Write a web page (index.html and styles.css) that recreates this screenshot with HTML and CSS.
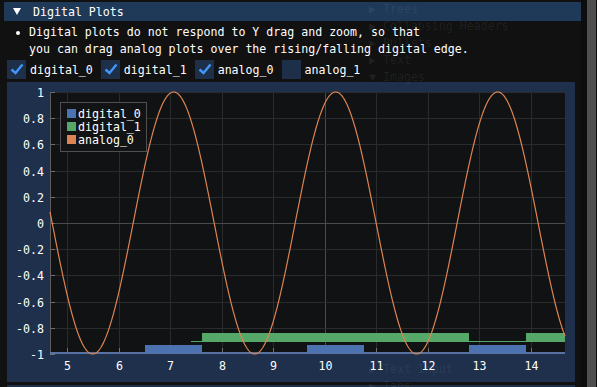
FILE: index.html
```html
<!DOCTYPE html>
<html lang="en">
<head>
  <meta charset="UTF-8">
  <meta name="viewport" content="width=device-width, initial-scale=1.0">
  <title>Digital Plots</title>
  <link rel="stylesheet" href="styles.css">
</head>
<body>
  <div class="app">
    <div class="window">
      <div class="header"><span class="arrow"></span>Digital Plots</div>
      <div class="content">
        <div class="bullet-text">
          <span class="bullet"></span>
          <div>
            <div>Digital plots do not respond to Y drag and zoom, so that</div>
            <div>you can drag analog plots over the rising/falling digital edge.</div>
          </div>
        </div>
        <div class="checks">
          <div class="check"><span class="box"><svg width="19" height="19"><polyline points="4.5,9.5 8.5,13 15.5,4.5" /></svg></span>digital_0</div>
          <div class="check"><span class="box"><svg width="19" height="19"><polyline points="4.5,9.5 8.5,13 15.5,4.5" /></svg></span>digital_1</div>
          <div class="check"><span class="box"><svg width="19" height="19"><polyline points="4.5,9.5 8.5,13 15.5,4.5" /></svg></span>analog_0</div>
          <div class="check"><span class="box"></span>analog_1</div>
        </div>
        <div class="plot-frame">
          <svg id="plot" width="568" height="300" viewBox="7 82 568 300">
            <rect class="plot-bg" x="50" y="92" width="515" height="261" />
            <g id="grid"></g>
            <g id="ticks"></g>
            <line class="axis" x1="50.5" y1="92" x2="50.5" y2="353" />
            <!-- digital_1 -->
            <rect class="green" x="191" y="341" width="11" height="1" />
            <rect class="green" x="202" y="333" width="267" height="9" />
            <rect class="green" x="469" y="341" width="57" height="1" />
            <rect class="green" x="526" y="333" width="39" height="9" />
            <!-- digital_0 -->
            <rect class="blue-low" x="50" y="352" width="515" height="2" />
            <rect class="blue" x="145" y="345" width="57" height="8" />
            <rect class="blue" x="307" y="345" width="57" height="8" />
            <rect class="blue" x="469" y="345" width="57" height="8" />
            <polyline id="analog" class="analog" points="" />
            <g id="labels"></g>
            <g class="legend">
              <rect class="legend-box" x="60.5" y="102.5" width="86" height="49" />
              <rect class="blue" x="67" y="109" width="9" height="9" />
              <rect class="green" x="67" y="122" width="9" height="9" />
              <rect class="orange" x="67" y="135" width="9" height="9" />
              <text x="78" y="114">digital_0</text>
              <text x="78" y="127">digital_1</text>
              <text x="78" y="140">analog_0</text>
            </g>
          </svg>
        </div>
        <div class="next-item"></div>
      </div>
    </div>
    <div class="scroll"><div class="grab"></div></div>
  </div>

  <div class="ghost ghost-top">
    <div>▶ Trees</div>
    <div>▶ Collapsing Headers</div>
    <div>▶ Bullets</div>
    <div>▶ Text</div>
    <div>▼ Images</div>
  </div>
  <div class="ghost ghost-bottom">
    <div>▶ Text Input</div>
    <div>▶ Tabs</div>
  </div>

  <script>
    const NS = "http://www.w3.org/2000/svg";
    const xMin = 4.67, pxPerUnit = 51.56, left = 50, right = 565;
    const zeroY = 223, pxPerY = 131;
    const toX = t => left + (t - xMin) * pxPerUnit;
    const toY = v => zeroY - v * pxPerY;

    function add(parent, tag, attrs, text) {
      const el = document.createElementNS(NS, tag);
      Object.keys(attrs).forEach(k => el.setAttribute(k, attrs[k]));
      if (text !== undefined) el.textContent = text;
      document.getElementById(parent).appendChild(el);
    }

    // grid lines + tick labels
    for (let t = 5; t <= 14; t++) {
      const x = Math.round(toX(t)) + 0.5;
      add("grid", "line", { x1: x, y1: 92, x2: x, y2: 353, class: t === 10 ? "grid major" : "grid" });
      add("ticks", "line", { x1: x, y1: 348, x2: x, y2: 353, class: "tick" });
      add("labels", "text", { x: x, y: 366, class: "xlabel" }, String(t));
    }
    for (let i = -5; i <= 5; i++) {
      const v = i / 5;
      const y = Math.round(toY(v)) + 0.5;
      if (i > -5) add("grid", "line", { x1: 50, y1: y, x2: 565, y2: y, class: i === 0 ? "grid major" : "grid" });
      add("ticks", "line", { x1: 50, y1: y, x2: 55, y2: y, class: "tick" });
      const label = i === 0 ? "0" : (Math.abs(i) === 5 ? String(i / 5) : v.toFixed(1));
      add("labels", "text", { x: 44, y: y, class: "ylabel" }, label);
    }

    // analog_0 = sin(2t)
    const pts = [];
    for (let px = left; px <= right; px += 0.5) {
      const t = xMin + (px - left) / pxPerUnit;
      pts.push(px + "," + toY(Math.sin(2 * t)).toFixed(2));
    }
    document.getElementById("analog").setAttribute("points", pts.join(" "));
  </script>
</body>
</html>
```

FILE: styles.css
```css
body {
  margin: 0;
  width: 597px;
  height: 387px;
  overflow: hidden;
  position: relative;
  background-color: #0d0d0d;
  color: #fff;
  font-family: "DejaVu Sans Mono", "Liberation Mono", monospace;
  font-size: 11.6px;
}
.app {
  display: flex;
  height: 387px;
}
.window {
  width: 581px;
  box-sizing: border-box;
  padding: 2px 0 0 4px;
  background-color: #111;
}
.header {
  height: 19px;
  display: flex;
  align-items: center;
  padding-left: 9px;
  background-color: #1f3958;
}
.arrow {
  width: 0;
  height: 0;
  border-left: 4px solid transparent;
  border-right: 4px solid transparent;
  border-top: 7px solid #fff;
  margin-right: 12px;
}
.content {
  padding-left: 3px;
  width: 568px;
}
.bullet-text {
  display: flex;
  margin-top: 3px;
  line-height: 17px;
}
.bullet {
  width: 4px;
  height: 4px;
  border-radius: 50%;
  background-color: #fff;
  margin: 6.5px 9px 0 9px;
  flex: none;
}
.checks {
  display: flex;
  gap: 8px;
  margin-top: 2px;
  height: 19px;
}
.check {
  display: flex;
  align-items: center;
  gap: 4px;
}
.box {
  width: 19px;
  height: 19px;
  background-color: #1d2f49;
}
.box svg {
  display: block;
}
.box polyline {
  fill: none;
  stroke: #4296fa;
  stroke-width: 2.4;
}
.plot-frame {
  margin-top: 3px;
  width: 568px;
  height: 300px;
  background-color: #1e304b;
}
.plot-frame svg {
  display: block;
}
.plot-bg {
  fill: #111213;
}
.grid {
  stroke: #2a2b2d;
  stroke-width: 1;
}
.grid.major {
  stroke: #4a4b4d;
}
.tick {
  stroke: #707070;
  stroke-width: 1;
}
.axis {
  stroke: #5c5c5c;
}
.blue {
  fill: #4c72b0;
}
.blue-low {
  fill: #5a72a2;
}
.green {
  fill: #55a868;
}
.orange {
  fill: #dd8452;
}
.analog {
  fill: none;
  stroke: #dd8452;
  stroke-width: 1.2;
}
.plot-frame text {
  fill: #fff;
  font-family: "DejaVu Sans Mono", "Liberation Mono", monospace;
  font-size: 11.6px;
  dominant-baseline: central;
}
.xlabel {
  text-anchor: middle;
}
.ylabel {
  text-anchor: end;
}
.legend-box {
  fill: #121314;
  stroke: #505050;
  stroke-width: 1;
}
.next-item {
  margin-top: 3px;
  height: 3px;
  background-color: #1d2f49;
}
.scroll {
  margin-left: 6px;
  width: 9px;
  height: 387px;
}
.grab {
  height: 100%;
  background-color: #4f4f4f;
}
.ghost {
  position: absolute;
  left: 369px;
  line-height: 17px;
  color: rgba(255, 255, 255, 0.07);
  pointer-events: none;
}
.ghost-top {
  top: 1px;
}
.ghost-bottom {
  top: 361px;
}
```
